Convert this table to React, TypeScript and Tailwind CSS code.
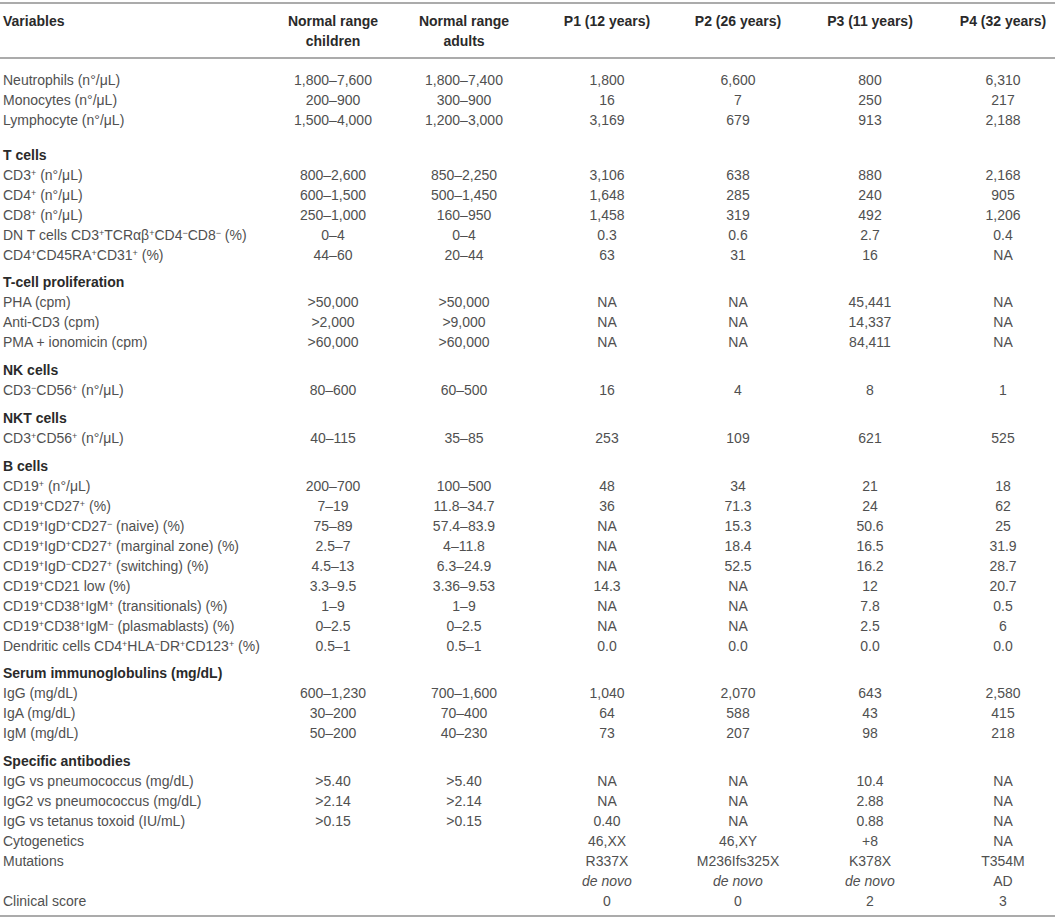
import React from 'react'

type DataRow = {
  kind: 'data'
  label: React.ReactNode
  children: string
  adults: string
  p: React.ReactNode[]
}
type HeadRow = { kind: 'head'; label: string; pad: string }
type Row = DataRow | HeadRow

const Up = ({ children }: { children: React.ReactNode }) => (
  <sup className="text-[9px]">{children}</sup>
)

const d = (
  label: React.ReactNode,
  children: string,
  adults: string,
  p: React.ReactNode[],
): DataRow => ({ kind: 'data', label, children, adults, p })

const h = (label: string, pad = 'pt-[8px]'): HeadRow => ({ kind: 'head', label, pad })

const mu = 'μ'

const rows: Row[] = [
  d(`Neutrophils (n°/${mu}L)`, '1,800–7,600', '1,800–7,400', ['1,800', '6,600', '800', '6,310']),
  d(`Monocytes (n°/${mu}L)`, '200–900', '300–900', ['16', '7', '250', '217']),
  d(`Lymphocyte (n°/${mu}L)`, '1,500–4,000', '1,200–3,000', ['3,169', '679', '913', '2,188']),
  h('T cells', 'pt-[15px]'),
  d(<>CD3<Up>+</Up> (n°/{mu}L)</>, '800–2,600', '850–2,250', ['3,106', '638', '880', '2,168']),
  d(<>CD4<Up>+</Up> (n°/{mu}L)</>, '600–1,500', '500–1,450', ['1,648', '285', '240', '905']),
  d(<>CD8<Up>+</Up> (n°/{mu}L)</>, '250–1,000', '160–950', ['1,458', '319', '492', '1,206']),
  d(
    <>DN T cells CD3<Up>+</Up>TCRαβ<Up>+</Up>CD4<Up>−</Up>CD8<Up>−</Up> (%)</>,
    '0–4',
    '0–4',
    ['0.3', '0.6', '2.7', '0.4'],
  ),
  d(<>CD4<Up>+</Up>CD45RA<Up>+</Up>CD31<Up>+</Up> (%)</>, '44–60', '20–44', ['63', '31', '16', 'NA']),
  h('T-cell proliferation', 'pt-[7px]'),
  d('PHA (cpm)', '>50,000', '>50,000', ['NA', 'NA', '45,441', 'NA']),
  d('Anti-CD3 (cpm)', '>2,000', '>9,000', ['NA', 'NA', '14,337', 'NA']),
  d('PMA + ionomicin (cpm)', '>60,000', '>60,000', ['NA', 'NA', '84,411', 'NA']),
  h('NK cells'),
  d(<>CD3<Up>−</Up>CD56<Up>+</Up> (n°/{mu}L)</>, '80–600', '60–500', ['16', '4', '8', '1']),
  h('NKT cells'),
  d(<>CD3<Up>+</Up>CD56<Up>+</Up> (n°/{mu}L)</>, '40–115', '35–85', ['253', '109', '621', '525']),
  h('B cells'),
  d(<>CD19<Up>+</Up> (n°/{mu}L)</>, '200–700', '100–500', ['48', '34', '21', '18']),
  d(<>CD19<Up>+</Up>CD27<Up>+</Up> (%)</>, '7–19', '11.8–34.7', ['36', '71.3', '24', '62']),
  d(
    <>CD19<Up>+</Up>IgD<Up>+</Up>CD27<Up>−</Up> (naive) (%)</>,
    '75–89',
    '57.4–83.9',
    ['NA', '15.3', '50.6', '25'],
  ),
  d(
    <>CD19<Up>+</Up>IgD<Up>+</Up>CD27<Up>+</Up> (marginal zone) (%)</>,
    '2.5–7',
    '4–11.8',
    ['NA', '18.4', '16.5', '31.9'],
  ),
  d(
    <>CD19<Up>+</Up>IgD<Up>−</Up>CD27<Up>+</Up> (switching) (%)</>,
    '4.5–13',
    '6.3–24.9',
    ['NA', '52.5', '16.2', '28.7'],
  ),
  d(<>CD19<Up>+</Up>CD21 low (%)</>, '3.3–9.5', '3.36–9.53', ['14.3', 'NA', '12', '20.7']),
  d(
    <>CD19<Up>+</Up>CD38<Up>+</Up>IgM<Up>+</Up> (transitionals) (%)</>,
    '1–9',
    '1–9',
    ['NA', 'NA', '7.8', '0.5'],
  ),
  d(
    <>CD19<Up>+</Up>CD38<Up>+</Up>IgM<Up>−</Up> (plasmablasts) (%)</>,
    '0–2.5',
    '0–2.5',
    ['NA', 'NA', '2.5', '6'],
  ),
  d(
    <>Dendritic cells CD4<Up>+</Up>HLA<Up>−</Up>DR<Up>+</Up>CD123<Up>+</Up> (%)</>,
    '0.5–1',
    '0.5–1',
    ['0.0', '0.0', '0.0', '0.0'],
  ),
  h('Serum immunoglobulins (mg/dL)', 'pt-[7px]'),
  d('IgG (mg/dL)', '600–1,230', '700–1,600', ['1,040', '2,070', '643', '2,580']),
  d('IgA (mg/dL)', '30–200', '70–400', ['64', '588', '43', '415']),
  d('IgM (mg/dL)', '50–200', '40–230', ['73', '207', '98', '218']),
  h('Specific antibodies'),
  d('IgG vs pneumococcus (mg/dL)', '>5.40', '>5.40', ['NA', 'NA', '10.4', 'NA']),
  d('IgG2 vs pneumococcus (mg/dL)', '>2.14', '>2.14', ['NA', 'NA', '2.88', 'NA']),
  d('IgG vs tetanus toxoid (IU/mL)', '>0.15', '>0.15', ['0.40', 'NA', '0.88', 'NA']),
  d('Cytogenetics', '', '', ['46,XX', '46,XY', '+8', 'NA']),
  d('Mutations', '', '', [
    <>R337X<br /><i>de novo</i></>,
    <>M236Ifs325X<br /><i>de novo</i></>,
    <>K378X<br /><i>de novo</i></>,
    <>T354M<br />AD</>,
  ]),
  d('Clinical score', '', '', ['0', '0', '2', '3']),
]

const headers = [
  <>Normal range<br />children</>,
  <>Normal range<br />adults</>,
  'P1 (12 years)',
  'P2 (26 years)',
  'P3 (11 years)',
  'P4 (32 years)',
]

export default function App() {
  return (
    <div
      className="w-[1055px] h-[920px] bg-white pt-[2px] text-[14px] text-[#505050]"
      style={{ fontFamily: '"Liberation Sans", Arial, sans-serif' }}
    >
      <table className="w-[1055px] table-fixed border-collapse">
        <colgroup>
          <col className="w-[265px]" />
          <col className="w-[136px]" />
          <col className="w-[126px]" />
          <col className="w-[160px]" />
          <col className="w-[102px]" />
          <col className="w-[162px]" />
          <col className="w-[104px]" />
        </colgroup>
        <thead>
          <tr>
            <th className="border-t-2 border-b-2 border-[#ababab] pt-[8px] pb-[6px] pl-[3px] text-left align-top leading-[19.5px] font-bold text-[#2a2a2a]">
              Variables
            </th>
            {headers.map((hd, i) => (
              <th
                key={i}
                className="border-t-2 border-b-2 border-[#ababab] pt-[8px] pb-[6px] text-center align-top leading-[19.5px] font-bold text-[#2a2a2a] whitespace-nowrap"
              >
                {hd}
              </th>
            ))}
          </tr>
        </thead>
        <tbody>
          {rows.map((r, i) => {
            const first = i === 0 ? 'pt-[11px]' : ''
            const last = i === rows.length - 1 ? 'pb-[4px] border-b-2 border-[#ababab]' : ''
            if (r.kind === 'head') {
              return (
                <tr key={i}>
                  <td
                    colSpan={7}
                    className={`${r.pad} pl-[3px] leading-[20px] font-bold text-[#2a2a2a]`}
                  >
                    {r.label}
                  </td>
                </tr>
              )
            }
            return (
              <tr key={i}>
                <td className={`${first} ${last} pl-[3px] align-top leading-[20px] whitespace-nowrap`}>
                  {r.label}
                </td>
                <td className={`${first} ${last} text-center align-top leading-[20px]`}>{r.children}</td>
                <td className={`${first} ${last} text-center align-top leading-[20px]`}>{r.adults}</td>
                {r.p.map((v, j) => (
                  <td key={j} className={`${first} ${last} text-center align-top leading-[20px] whitespace-nowrap`}>
                    {v}
                  </td>
                ))}
              </tr>
            )
          })}
        </tbody>
      </table>
    </div>
  )
}
